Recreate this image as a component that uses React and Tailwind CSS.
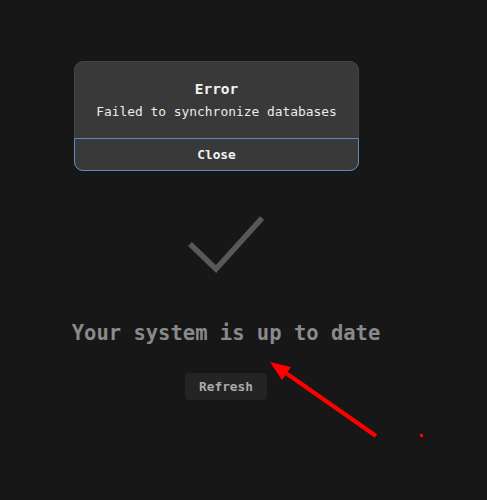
export default function App() {
  return (
    <div
      className="relative w-[487px] h-[500px] bg-[#171717] overflow-hidden"
      style={{ fontFamily: '"DejaVu Sans Mono", "Liberation Mono", monospace' }}
    >
      {/* Main status */}
      <div className="w-[452px] flex flex-col items-center pt-[214px]">
        <svg width="76" height="60" viewBox="0 0 76 60" className="ml-[-1px]">
          <polyline
            points="2,30 28,55 74,4"
            fill="none"
            stroke="#585858"
            strokeWidth="5.5"
          />
        </svg>
        <div className="mt-[45px] text-[20.5px] font-bold text-[#8a8a8a] leading-[28px]">
          Your system is up to date
        </div>
        <button className="mt-[26px] h-[27px] px-[14px] rounded-[4px] bg-[#242424] text-[#ababab] text-[12.8px] font-bold">
          Refresh
        </button>
      </div>

      {/* Error dialog */}
      <div className="absolute left-[74px] top-[61px] w-[285px] rounded-[9px] bg-[#393939] border border-[#444] flex flex-col">
        <div className="flex flex-col items-center pt-[17px] pb-[17px]">
          <div className="text-[14.5px] font-bold text-[#f2f2f2] leading-[20px]">Error</div>
          <div className="mt-[4px] text-[12.9px] text-[#ececec] leading-[18px]">
            Failed to synchronize databases
          </div>
        </div>
        <button className="-mx-px -mb-px h-[33px] border border-[#5d88ba] rounded-b-[9px] text-[12.8px] font-bold text-[#f2f2f2]">
          Close
        </button>
      </div>

      {/* Red annotation */}
      <svg className="absolute left-0 top-0" width="487" height="500">
        <line x1="376" y1="436" x2="283" y2="371" stroke="#ff0000" strokeWidth="4" />
        <polygon points="270,362 291,367 282,380" fill="#ff0000" />
        <rect x="420" y="434" width="3" height="3" fill="#ff0000" />
      </svg>
    </div>
  );
}
